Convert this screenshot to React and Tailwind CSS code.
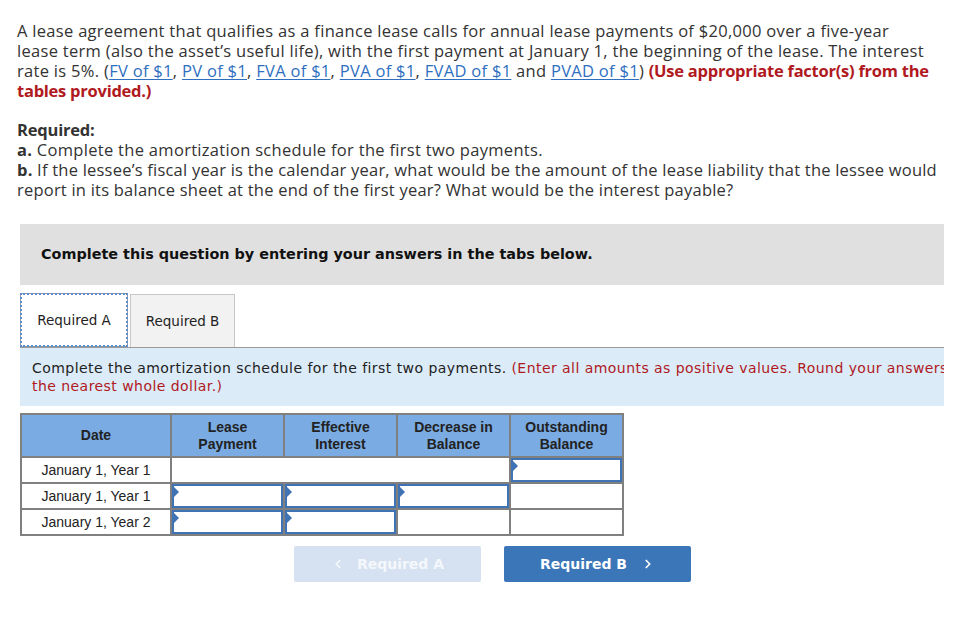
import { ChevronLeft, ChevronRight } from 'lucide-react';

const links = ['FV of $1', 'PV of $1', 'FVA of $1', 'PVA of $1'];

function Link({ children }) {
  return <a className="text-[#2f6fbf] underline underline-offset-2 decoration-1">{children}</a>;
}

function Input() {
  return (
    <div className="relative h-[24px] border-2 border-[#3f73b4] bg-white">
      <span className="absolute left-0 top-[1px] w-0 h-0 border-y-[5px] border-y-transparent border-l-[5px] border-l-[#3f73b4]" />
    </div>
  );
}

function DateCell({ children }) {
  return <td className="border-2 border-[#808080] text-center text-[14px] text-[#222] h-[26px] px-1">{children}</td>;
}

function Cell({ children }) {
  return <td className="border-2 border-[#808080] p-0 h-[26px]">{children}</td>;
}

export default function App() {
  return (
    <div className="w-[957px] h-[617px] bg-white overflow-hidden font-['Open_Sans',sans-serif]">
      <div className="pl-[17px] pt-[21px] text-[16.5px] leading-[20px] tracking-[0.3px] text-[#333] whitespace-nowrap">
        <p>
          A lease agreement that qualifies as a finance lease calls for annual lease payments of $20,000 over a five-year<br />
          lease term (also the asset’s useful life), with the first payment at January 1, the beginning of the lease. The interest<br />
          rate is 5%. (
          {links.map((l) => (
            <span key={l}><Link>{l}</Link>, </span>
          ))}
          <Link>FVAD of $1</Link> and <Link>PVAD of $1</Link>){' '}
          <b className="text-[#b0191e] tracking-[-0.25px]">(Use appropriate factor(s) from the</b><br />
          <b className="text-[#b0191e] tracking-[-0.25px]">tables provided.)</b>
        </p>
        <div className="mt-[19px]">
          <p className="font-bold tracking-[-0.2px]">Required:</p>
          <p><b>a.</b> Complete the amortization schedule for the first two payments.</p>
          <p className="tracking-[0.22px]">
            <b>b.</b> If the lessee’s fiscal year is the calendar year, what would be the amount of the lease liability that the lessee would<br />
            report in its balance sheet at the end of the first year? What would be the interest payable?
          </p>
        </div>
      </div>

      <div className="ml-[20px] w-[924px] mt-[24px] h-[61px] bg-[#e0e0e0] flex items-center pl-[21px] font-['DejaVu_Sans',sans-serif] font-bold text-[14.4px] text-[#111]">
        Complete this question by entering your answers in the tabs below.
      </div>

      <div className="ml-[20px] mt-[8px] flex items-end gap-[2px] font-['DejaVu_Sans',sans-serif] text-[13.5px] text-[#222]">
        <div className="w-[108px] h-[54px] outline-dotted outline-2 outline-[#5b8fcf] -outline-offset-2 border border-[#999] bg-white flex items-center justify-center">
          Required A
        </div>
        <div className="w-[105px] h-[53px] border border-[#c6c6c6] border-b-0 bg-[#f2f2f2] flex items-center justify-center">
          Required B
        </div>
      </div>

      <div className="ml-[20px] w-[924px] h-[59px] bg-[#dbebf8] border-t border-[#9a9a9a] overflow-hidden pl-[12px] pt-[11px] font-['DejaVu_Sans',sans-serif] text-[14px] leading-[18px] text-[#222] tracking-[0.45px] whitespace-nowrap">
        <p>
          Complete the amortization schedule for the first two payments.{' '}
          <span className="text-[#b0191e]">(Enter all amounts as positive values. Round your answers to</span>
          <br />
          <span className="text-[#b0191e]">the nearest whole dollar.)</span>
        </p>
      </div>

      <table className="ml-[20px] mt-[7px] border-collapse font-['Liberation_Sans',sans-serif]">
        <thead>
          <tr className="bg-[#7aace3] h-[43px] text-[14px] font-bold text-[#222] leading-[17px]">
            <th className="border-2 border-[#808080] w-[150px]">Date</th>
            <th className="border-2 border-[#808080] w-[113px]">Lease<br />Payment</th>
            <th className="border-2 border-[#808080] w-[113px]">Effective<br />Interest</th>
            <th className="border-2 border-[#808080] w-[113px]">Decrease in<br />Balance</th>
            <th className="border-2 border-[#808080] w-[113px]">Outstanding<br />Balance</th>
          </tr>
        </thead>
        <tbody>
          <tr>
            <DateCell>January 1, Year 1</DateCell>
            <td colSpan={3} className="border-2 border-[#808080]" />
            <Cell><Input /></Cell>
          </tr>
          <tr>
            <DateCell>January 1, Year 1</DateCell>
            <Cell><Input /></Cell>
            <Cell><Input /></Cell>
            <Cell><Input /></Cell>
            <Cell />
          </tr>
          <tr>
            <DateCell>January 1, Year 2</DateCell>
            <Cell><Input /></Cell>
            <Cell><Input /></Cell>
            <Cell />
            <Cell />
          </tr>
        </tbody>
      </table>

      <div className="flex gap-[23px] ml-[294px] mt-[10px] font-['DejaVu_Sans',sans-serif] font-bold text-[14px] text-white">
        <button className="w-[187px] h-[36px] rounded-[2px] bg-[#d6e2f1] text-[#f4f7fb] flex items-center justify-center gap-[12px]">
          <ChevronLeft size={14} strokeWidth={3} /> Required A
        </button>
        <button className="w-[187px] h-[36px] rounded-[2px] bg-[#3b76b8] flex items-center justify-center gap-[14px]">
          Required B <ChevronRight size={14} strokeWidth={3} />
        </button>
      </div>
    </div>
  );
}
